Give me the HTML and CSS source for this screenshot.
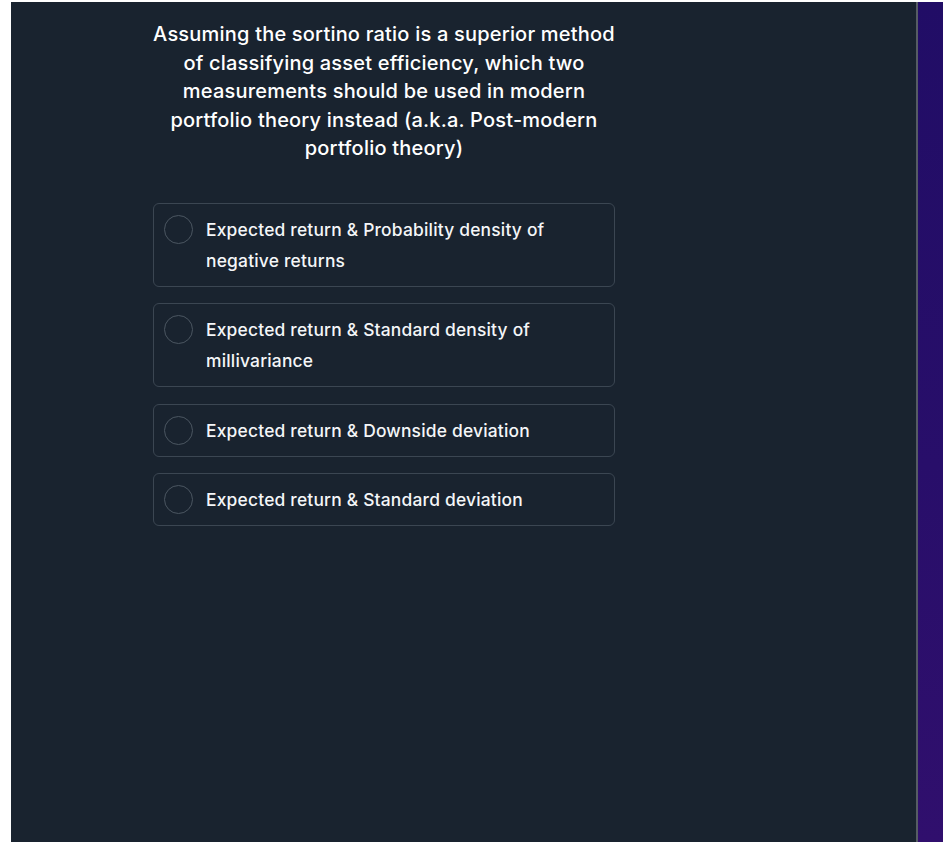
FILE: index.html
```html
<!DOCTYPE html>
<html>
<head>
<meta charset="utf-8">
<link rel="stylesheet" href="styles.css">
</head>
<body>
<div class="screen">
  <main class="panel">
    <div class="quiz">
      <h1 class="question">Assuming the sortino ratio is a superior method of classifying asset efficiency, which two measurements should be used in modern portfolio theory instead (a.k.a. Post-modern portfolio theory)</h1>
      <ul class="options">
        <li class="option"><span class="radio"></span><span class="label">Expected return &amp; Probability density of negative returns</span></li>
        <li class="option"><span class="radio"></span><span class="label">Expected return &amp; Standard density of millivariance</span></li>
        <li class="option"><span class="radio"></span><span class="label">Expected return &amp; Downside deviation</span></li>
        <li class="option"><span class="radio"></span><span class="label">Expected return &amp; Standard deviation</span></li>
      </ul>
    </div>
  </main>
  <div class="divider"></div>
  <aside class="side"></aside>
</div>
</body>
</html>
```
FILE: styles.css
```css
html, body {
  margin: 0;
  padding: 0;
  background: #ffffff;
  height: 100%;
}
body {
  font-family: Inter, "Noto Sans", sans-serif;
  overflow: hidden;
}
.screen {
  display: flex;
  height: 842px;
  padding-top: 2px;
  padding-left: 11px;
  box-sizing: border-box;
}
.panel {
  width: 905px;
  flex: none;
  background: #19232f;
  box-sizing: border-box;
  padding: 18px 0 0 142px;
}
.divider {
  width: 2px;
  flex: none;
  background: #565c64;
}
.side {
  width: 25px;
  flex: none;
  background: linear-gradient(180deg, #210d66 0%, #280e6a 55%, #300f6d 100%);
}
.quiz {
  width: 462px;
}
.question {
  margin: 0;
  font-size: 20px;
  font-weight: 500;
  line-height: 28.5px;
  color: #ffffff;
  text-align: center;
  letter-spacing: 0.2px;
}
.options {
  list-style: none;
  margin: 40px 0 0 0;
  padding: 0;
  display: flex;
  flex-direction: column;
  gap: 16.6px;
}
.option {
  display: flex;
  align-items: flex-start;
  gap: 13px;
  border: 1px solid #3b4652;
  border-radius: 6px;
  padding: 10px 12px 10px 10px;
}
.radio {
  flex: none;
  width: 27px;
  height: 27px;
  margin-top: 1px;
  border: 1.5px solid #4b5661;
  border-radius: 50%;
}
.label {
  font-size: 17.4px;
  font-weight: 500;
  line-height: 31px;
  letter-spacing: 0.2px;
  color: #f4f6f8;
  padding-right: 50px;
}
```
